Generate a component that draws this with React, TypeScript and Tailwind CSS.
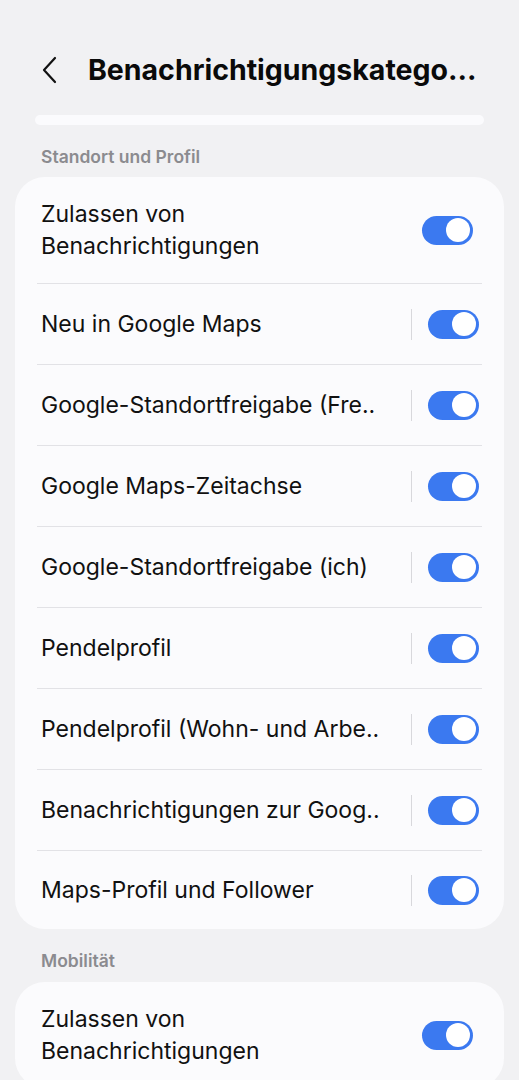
import React from 'react';

const Toggle: React.FC = () => (
  <div className="w-[51px] h-[29px] rounded-full bg-[#3b79f0] flex items-center justify-end pr-[3px]">
    <div className="w-[24px] h-[24px] rounded-full bg-white" />
  </div>
);

const MainRow: React.FC = () => (
  <div className="flex items-center justify-between h-[106px] pl-[26px] pr-[31px]">
    <div className="text-[23px] leading-[32px] text-[#111]">
      Zulassen von
      <br />
      Benachrichtigungen
    </div>
    <Toggle />
  </div>
);

const App: React.FC = () => {
  const rows = [
    'Neu in Google Maps',
    'Google-Standortfreigabe (Fre..',
    'Google Maps-Zeitachse',
    'Google-Standortfreigabe (ich)',
    'Pendelprofil',
    'Pendelprofil (Wohn- und Arbe..',
    'Benachrichtigungen zur Goog..',
    'Maps-Profil und Follower',
  ];

  return (
    <div
      className="w-[519px] h-[1080px] overflow-hidden bg-[#f1f1f3]"
      style={{ fontFamily: 'Inter, Roboto, sans-serif' }}
    >
      {/* Header */}
      <div className="flex items-center h-[70px] mt-[35px] pl-[40px]">
        <svg width="20" height="30" viewBox="0 0 20 30" fill="none">
          <path d="M15 3 L4 15 L15 27" stroke="#111" strokeWidth="2.2" strokeLinecap="round" strokeLinejoin="round" />
        </svg>
        <h1 className="ml-[28px] text-[28.5px] font-bold text-[#0a0a0a] whitespace-nowrap">
          Benachrichtigungskatego...
        </h1>
      </div>

      {/* scrolled card edge */}
      <div className="mx-[35px] mt-[10px] h-[10px] rounded-full bg-[#fbfbfd]" />

      <div className="pl-[41px] mt-[22px] text-[17.5px] font-semibold text-[#8b8b8f] leading-[20px]">
        Standort und Profil
      </div>

      {/* Card 1 */}
      <div className="mx-[15px] mt-[10px] rounded-[30px] bg-[#fbfbfd] overflow-hidden">
        <MainRow />
        {rows.map((label, i) => (
          <div key={label}>
            <div className="mx-[22px] h-px bg-[#e2e2e6]" />
            <div className={`flex items-center pl-[26px] pr-[25px] ${i === rows.length - 1 ? 'h-[78px]' : 'h-[80px]'}`}>
              <div className="flex-1 text-[23px] text-[#111] whitespace-nowrap">{label}</div>
              <div className="w-px h-[31px] bg-[#d8d8dc] mr-[16px]" />
              <Toggle />
            </div>
          </div>
        ))}
      </div>

      <div className="pl-[41px] mt-[22px] text-[17.5px] font-semibold text-[#8b8b8f] leading-[20px]">
        Mobilität
      </div>

      {/* Card 2 */}
      <div className="mx-[15px] mt-[11px] rounded-[30px] bg-[#fbfbfd] overflow-hidden">
        <MainRow />
      </div>
    </div>
  );
};

export default App;
